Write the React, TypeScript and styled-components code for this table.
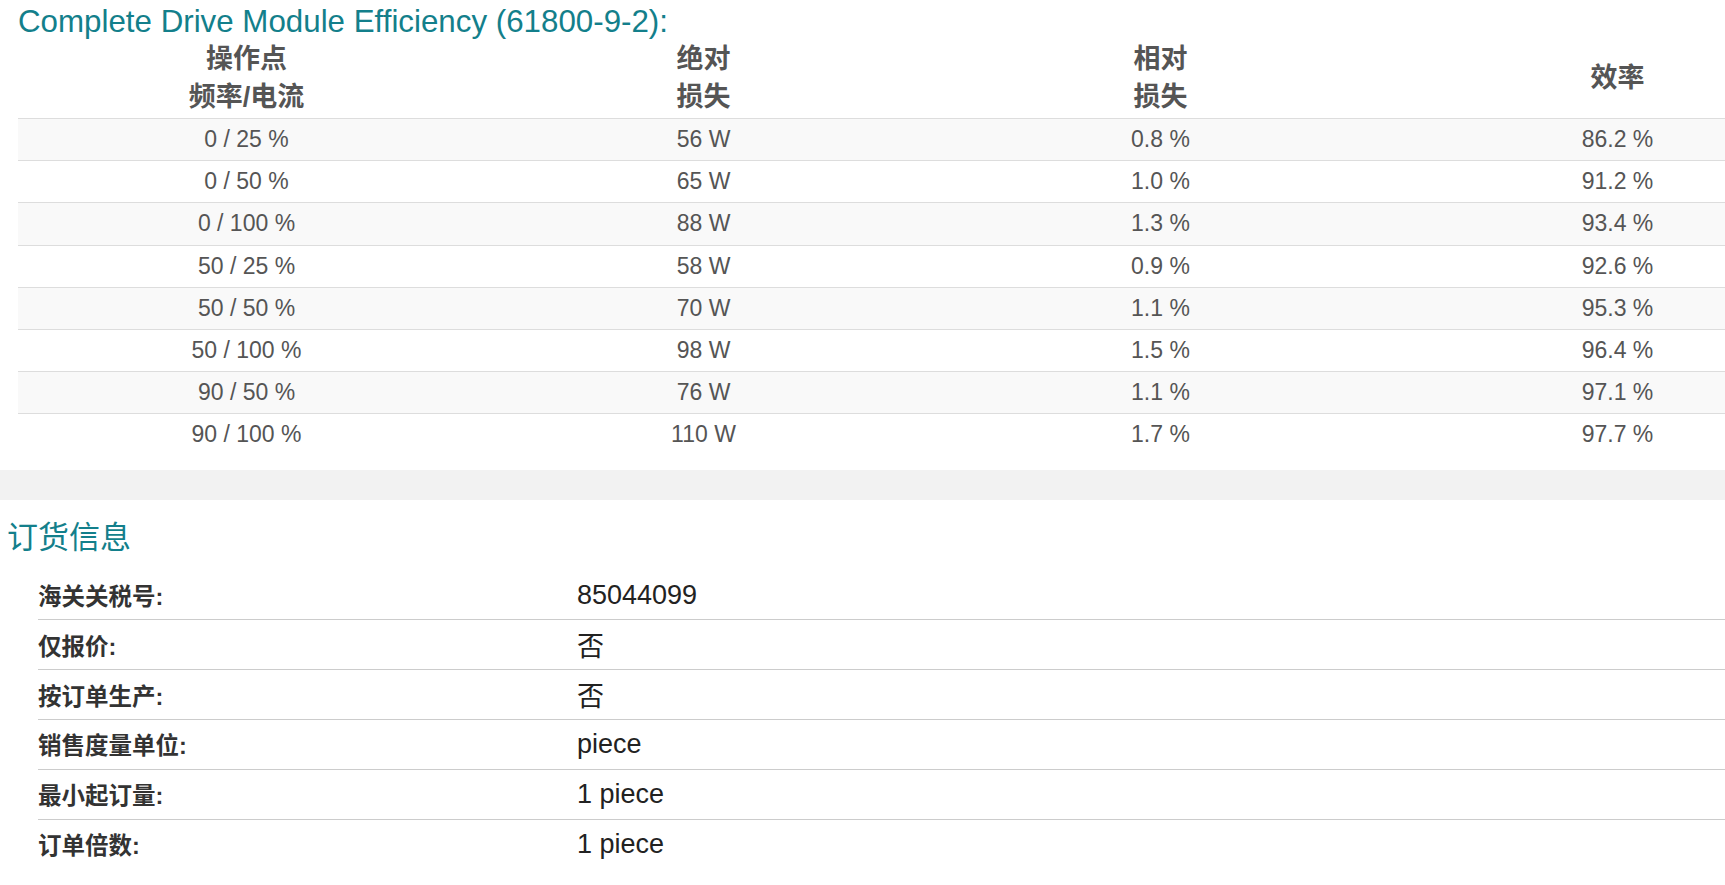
import React from "react";
import styled, { createGlobalStyle } from "styled-components";

const GlobalStyle = createGlobalStyle`
  html, body {
    margin: 0;
    padding: 0;
    overflow: hidden;
    background: #ffffff;
  }
  body {
    font-family: "Liberation Sans", Arial, "Noto Sans CJK SC", sans-serif;
  }
`;

const Page = styled.div`
  width: 100%;
`;

const EfficiencySection = styled.section`
  padding-left: 18px;
  padding-bottom: 14px;
`;

const SectionTitle = styled.h3`
  margin: 0;
  padding-top: 5px;
  font-size: 31.3px;
  line-height: 33px;
  font-weight: normal;
  color: #137f8b;
  white-space: nowrap;
`;

const DataTable = styled.table`
  width: 1828px;
  border-collapse: collapse;
  table-layout: fixed;
`;

const HeadCell = styled.th`
  font-size: 27px;
  font-weight: bold;
  color: #555555;
  line-height: 38px;
  padding: 2px 5px;
  text-align: center;
  vertical-align: middle;
  border-bottom: 1px solid #dddddd;
`;

const BodyRow = styled.tr<{ $striped: boolean }>`
  background: ${(p) => (p.$striped ? "#f9f9f9" : "#ffffff")};
`;

const BodyCell = styled.td`
  font-size: 23px;
  color: #555555;
  line-height: 31.2px;
  padding: 5px;
  text-align: center;
  border-top: 1px solid #dddddd;
`;

const Divider = styled.div`
  height: 30px;
  background: #f2f2f2;
`;

const OrderSection = styled.section`
  padding-left: 7px;
`;

const OrderHeading = styled.h3`
  margin: 21px 0 0;
  font-size: 31px;
  line-height: 33px;
  font-weight: normal;
  color: #137f8b;
`;

const OrderList = styled.div`
  margin-top: 17px;
  margin-left: 31px;
`;

const OrderRow = styled.div`
  display: grid;
  grid-template-columns: 539px 1fr;
  align-items: center;
  height: 48.8px;
  & + & {
    border-top: 1px solid #cccccc;
  }
`;

const OrderLabel = styled.div`
  font-size: 23.5px;
  font-weight: bold;
  color: #333333;
`;

const OrderValue = styled.div`
  font-size: 27px;
  color: #222222;
`;

const rows = [
  ["0 / 25 %", "56 W", "0.8 %", "86.2 %"],
  ["0 / 50 %", "65 W", "1.0 %", "91.2 %"],
  ["0 / 100 %", "88 W", "1.3 %", "93.4 %"],
  ["50 / 25 %", "58 W", "0.9 %", "92.6 %"],
  ["50 / 50 %", "70 W", "1.1 %", "95.3 %"],
  ["50 / 100 %", "98 W", "1.5 %", "96.4 %"],
  ["90 / 50 %", "76 W", "1.1 %", "97.1 %"],
  ["90 / 100 %", "110 W", "1.7 %", "97.7 %"],
];

const orderInfo = [
  ["海关关税号:", "85044099"],
  ["仅报价:", "否"],
  ["按订单生产:", "否"],
  ["销售度量单位:", "piece"],
  ["最小起订量:", "1 piece"],
  ["订单倍数:", "1 piece"],
];

export default function App() {
  return (
    <Page>
      <GlobalStyle />
      <EfficiencySection>
        <SectionTitle>Complete Drive Module Efficiency (61800-9-2):</SectionTitle>
        <DataTable>
          <thead>
            <tr>
              <HeadCell>
                操作点
                <br />
                频率/电流
              </HeadCell>
              <HeadCell>
                绝对
                <br />
                损失
              </HeadCell>
              <HeadCell>
                相对
                <br />
                损失
              </HeadCell>
              <HeadCell>效率</HeadCell>
            </tr>
          </thead>
          <tbody>
            {rows.map((r, i) => (
              <BodyRow key={i} $striped={i % 2 === 0}>
                {r.map((c, j) => (
                  <BodyCell key={j}>{c}</BodyCell>
                ))}
              </BodyRow>
            ))}
          </tbody>
        </DataTable>
      </EfficiencySection>
      <Divider />
      <OrderSection>
        <OrderHeading>订货信息</OrderHeading>
        <OrderList>
          {orderInfo.map(([label, value]) => (
            <OrderRow key={label}>
              <OrderLabel>{label}</OrderLabel>
              <OrderValue>{value}</OrderValue>
            </OrderRow>
          ))}
        </OrderList>
      </OrderSection>
    </Page>
  );
}
